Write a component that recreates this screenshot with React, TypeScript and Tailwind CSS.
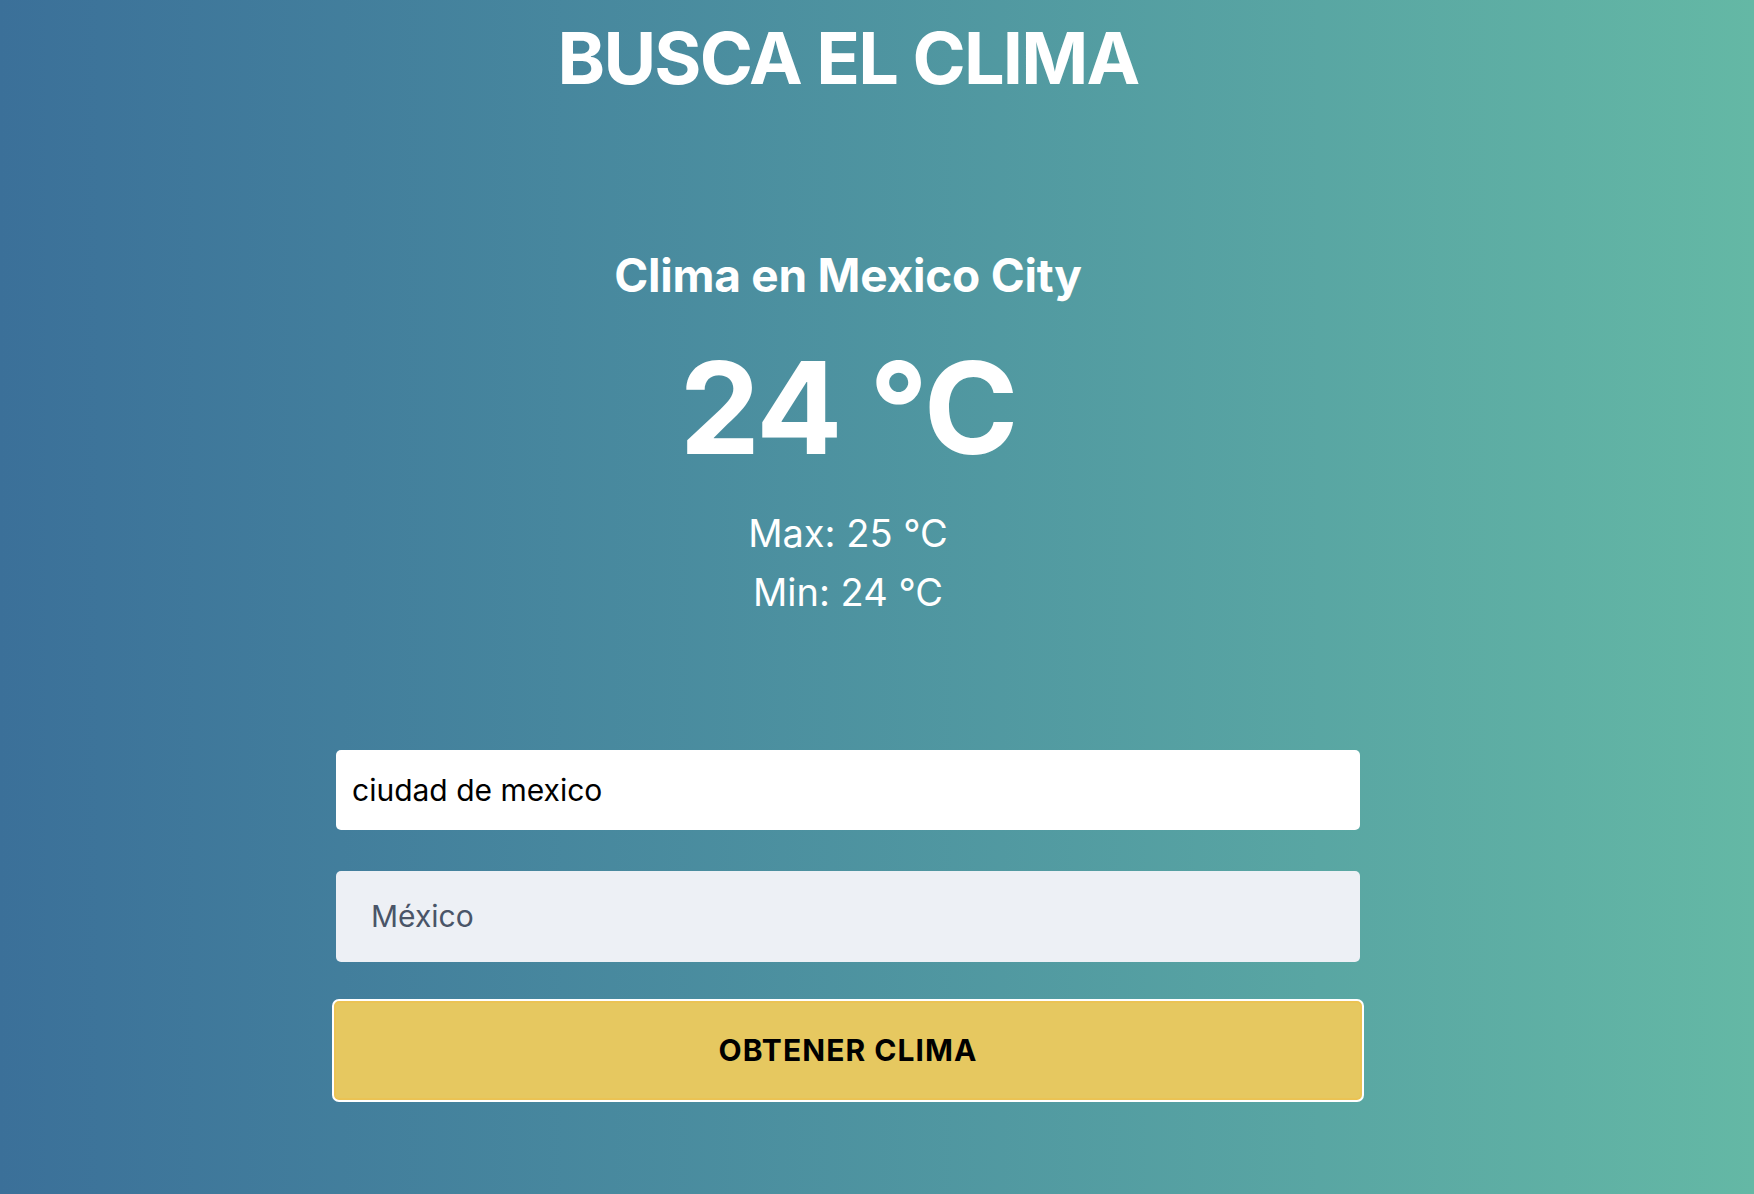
import React from "react";

export default function App() {
  return (
    <div className="h-screen w-full overflow-hidden bg-linear-to-r from-[#3b7099] to-[#64b8a5] font-['Inter','Noto_Sans',sans-serif]">
      <div className="flex w-[1696px] flex-col items-center">
        <h1 className="mt-[22px] text-[72px] leading-none font-bold tracking-[-0.025em] text-white">BUSCA EL CLIMA</h1>
        <h2 className="mt-[158px] text-[46px] leading-none font-bold tracking-[-0.005em] text-white">Clima en Mexico City</h2>
        <p className="mt-[46px] text-[128px] leading-none font-bold tracking-[-0.015em] text-white">24 °C</p>
        <p className="mt-[42px] text-[38px] leading-none text-white">Max: 25 °C</p>
        <p className="mt-[21px] text-[38px] leading-none text-white">Min: 24 °C</p>
        <form className="mt-[139px] flex w-[1024px] flex-col">
          <input
            readOnly
            value="ciudad de mexico"
            className="h-[80px] w-full rounded-[5px] bg-white px-[16px] text-[30px] text-black outline-none"
          />
          <div className="mt-[41px] flex h-[91px] w-full items-center rounded-[5px] bg-[#edf0f5] px-[35px] text-[30px] text-[#4a5568]">
            México
          </div>
          <button
            type="button"
            className="mt-[37px] -mx-[4px] h-[103px] rounded-[7px] border-[2px] border-white bg-[#e6c860] text-[30px] font-bold tracking-[0.035em] text-black shadow-[inset_0_0_0_2px_#ebc354]"
          >
            OBTENER CLIMA
          </button>
        </form>
      </div>
    </div>
  );
}
